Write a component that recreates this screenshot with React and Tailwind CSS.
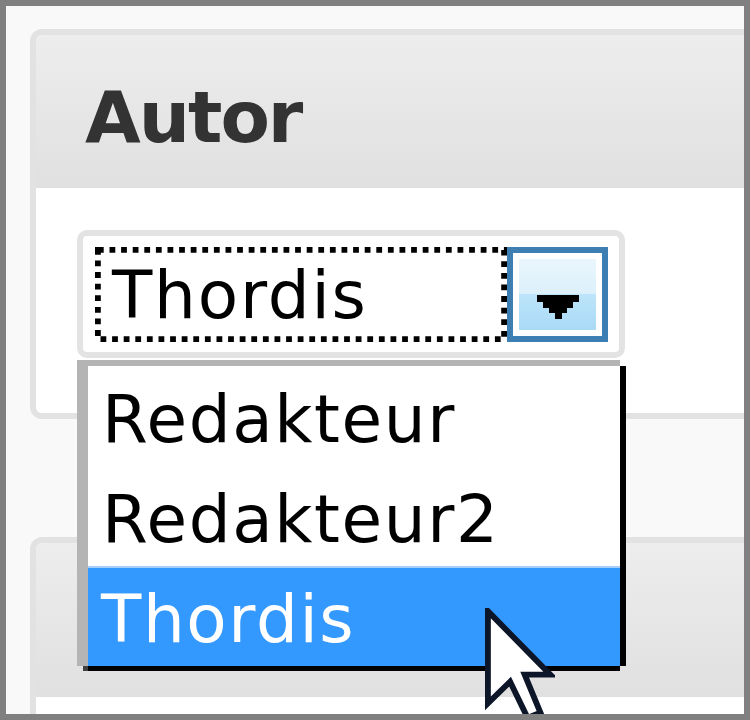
import React from "react";

export default function App() {
  const font = { fontFamily: '"DejaVu Sans", Verdana, sans-serif' };
  return (
    <div
      className="relative w-[750px] h-[720px] border-[6px] border-[#808080] bg-[#f9f9f9] overflow-hidden"
      style={font}
    >
      <div className="pt-[23px] pl-[24px]">
        {/* Panel 1 */}
        <div className="w-[740px] rounded-[12px] border-[6px] border-[#e2e2e2] overflow-hidden">
          <div className="h-[153px] bg-[linear-gradient(to_bottom,#ededed,#e0e0e0)] pl-[49px] pt-[40px]">
            <div className="text-[72px] leading-[84px] font-bold tracking-[-2px] text-[#333333]">
              Autor
            </div>
          </div>
          <div className="h-[225px] bg-white pl-[41px] pt-[42px]">
            <div className="w-[548px] h-[128px] rounded-[10px] border-[6px] border-[#e3e3e3] bg-white pl-[12px] pt-[11px] flex">
              <div className="relative w-[412px] h-[95px]">
                <svg className="absolute inset-0" width="412" height="95">
                  <rect
                    x="2.9"
                    y="2.9"
                    width="406.2"
                    height="89.2"
                    fill="none"
                    stroke="#000"
                    strokeWidth="5.8"
                    strokeDasharray="5.8 5.8"
                  />
                </svg>
                <div className="pl-[17px] pt-[10px] text-[66px] leading-[77px] tracking-[1.8px] text-black">
                  Thordis
                </div>
              </div>
              <div className="w-[101px] h-[95px] border-[6px] border-[#3d7fb3] bg-white p-[6px]">
                <div className="w-full h-full bg-[linear-gradient(to_bottom,#eaf6fd_0%,#dcf0fb_49%,#bde4fa_50%,#a9daf6_100%)] flex justify-center pt-[36px]">
                  <svg width="42" height="24" viewBox="0 0 42 24">
                    <polygon
                      fill="#000"
                      points="0,0 42,0 42,7 36,7 36,13 30,13 30,18 25,18 25,24 18,24 18,18 12,18 12,13 6,13 6,7 0,7"
                    />
                  </svg>
                </div>
              </div>
            </div>
          </div>
        </div>

        {/* Panel 2 */}
        <div className="mt-[118px] w-[740px] rounded-[12px] border-[6px] border-[#e2e2e2] overflow-hidden">
          <div className="h-[154px] bg-[linear-gradient(to_bottom,#ededed,#e0e0e0)]" />
          <div className="h-[100px] bg-white" />
        </div>
      </div>

      {/* Dropdown list overlay */}
      <div className="absolute left-[71px] top-[354px] w-[549px]">
        <div className="flex">
          <div className="flex-1 border-t-[6px] border-l-[11px] border-[#b4b4b4] bg-white text-[66px] tracking-[1.6px]">
            <div className="h-[100px] pl-[14px] pt-[8px] leading-[92px] text-black">Redakteur</div>
            <div className="h-[100px] pl-[14px] pt-[8px] leading-[92px] text-black">Redakteur2</div>
            <div className="h-[100px] pl-[13px] pt-[6px] leading-[92px] text-white bg-[#3399ff] border-t-2 border-[#a6cff7]">
              Thordis
            </div>
          </div>
          <div className="w-[6px] mt-[6px] bg-black" />
        </div>
        <div className="flex h-[5px] ml-[6px] mr-[6px]">
          <div className="w-[5px] bg-[#404040]" />
          <div className="flex-1 bg-black" />
        </div>
      </div>

      {/* Mouse cursor */}
      <svg
        className="absolute left-[479px] top-[602px]"
        width="70"
        height="117"
        viewBox="0 0 12 20"
      >
        <polygon
          points="0.5,0.5 0.5,16.3 4.3,12.6 7.3,18.8 9.5,17.9 6.8,11.4 11.2,11.4"
          fill="#ffffff"
          stroke="#0d1628"
          strokeWidth="1"
          strokeLinejoin="miter"
        />
      </svg>
    </div>
  );
}
